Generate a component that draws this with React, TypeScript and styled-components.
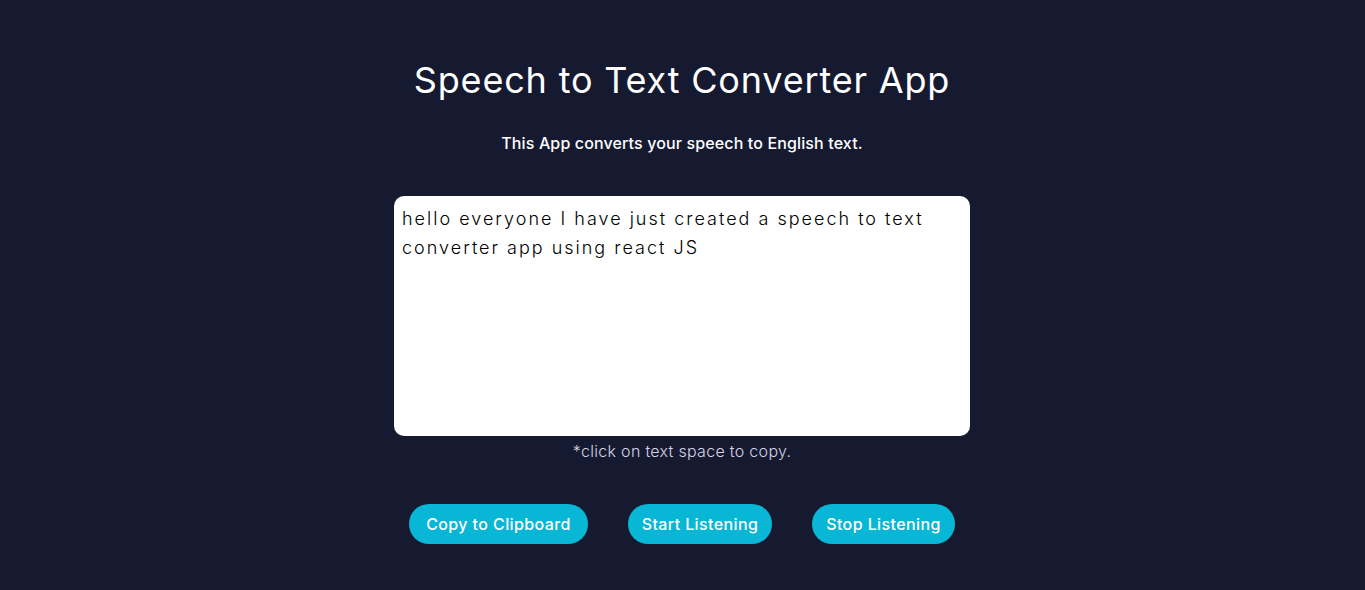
import React from "react";
import styled, { createGlobalStyle } from "styled-components";

const GlobalStyle = createGlobalStyle`
  html, body { margin: 0; padding: 0; background: #161a31; }
  body { font-family: "Inter", "Open Sans", sans-serif; }
`;

const Page = styled.div`
  min-height: 590px;
  background: #161a31;
  display: flex;
  flex-direction: column;
  align-items: center;
  padding-top: 58px;
  padding-right: 1px;
  box-sizing: border-box;
`;

const Title = styled.h1`
  margin: 0;
  font-size: 36px;
  line-height: 44px;
  font-weight: 400;
  color: #ffffff;
  letter-spacing: 0.82px;
`;

const Subtitle = styled.p`
  margin: 29px 0 0;
  font-size: 16px;
  line-height: 24px;
  font-weight: 500;
  color: #ffffff;
  letter-spacing: 0.13px;
`;

const TextBox = styled.textarea`
  margin-top: 41px;
  width: 576px;
  height: 240px;
  box-sizing: border-box;
  padding: 8px 8px;
  border: none;
  border-radius: 10px;
  background: #ffffff;
  color: #000000;
  font-family: "Inter", "Open Sans", sans-serif;
  font-size: 18px;
  font-weight: 300;
  line-height: 29px;
  letter-spacing: 2px;
  resize: none;
  outline: none;
  display: block;
`;

const Hint = styled.p`
  margin: 3px 0 0;
  font-size: 16px;
  line-height: 24px;
  font-weight: 300;
  color: #d4d4e2;
  letter-spacing: 0.3px;
`;

const ButtonRow = styled.div`
  display: flex;
  gap: 40px;
  margin-top: 41px;
`;

const PillButton = styled.button<{ $w: number }>`
  width: ${(p) => p.$w}px;
  height: 40px;
  border: none;
  border-radius: 20px;
  background: #08b6d6;
  color: #ffffff;
  font-family: "Inter", "Open Sans", sans-serif;
  font-size: 16px;
  font-weight: 500;
  letter-spacing: 0.4px;
  cursor: pointer;
  padding: 0;
`;

export default function App() {
  return (
    <>
      <GlobalStyle />
      <Page>
        <Title>Speech to Text Converter App</Title>
        <Subtitle>This App converts your speech to English text.</Subtitle>
        <TextBox
          readOnly
          value="hello everyone I have just created a speech to text converter app using react JS"
        />
        <Hint>*click on text space to copy.</Hint>
        <ButtonRow>
          <PillButton $w={179}>Copy to Clipboard</PillButton>
          <PillButton $w={144}>Start Listening</PillButton>
          <PillButton $w={143}>Stop Listening</PillButton>
        </ButtonRow>
      </Page>
    </>
  );
}
